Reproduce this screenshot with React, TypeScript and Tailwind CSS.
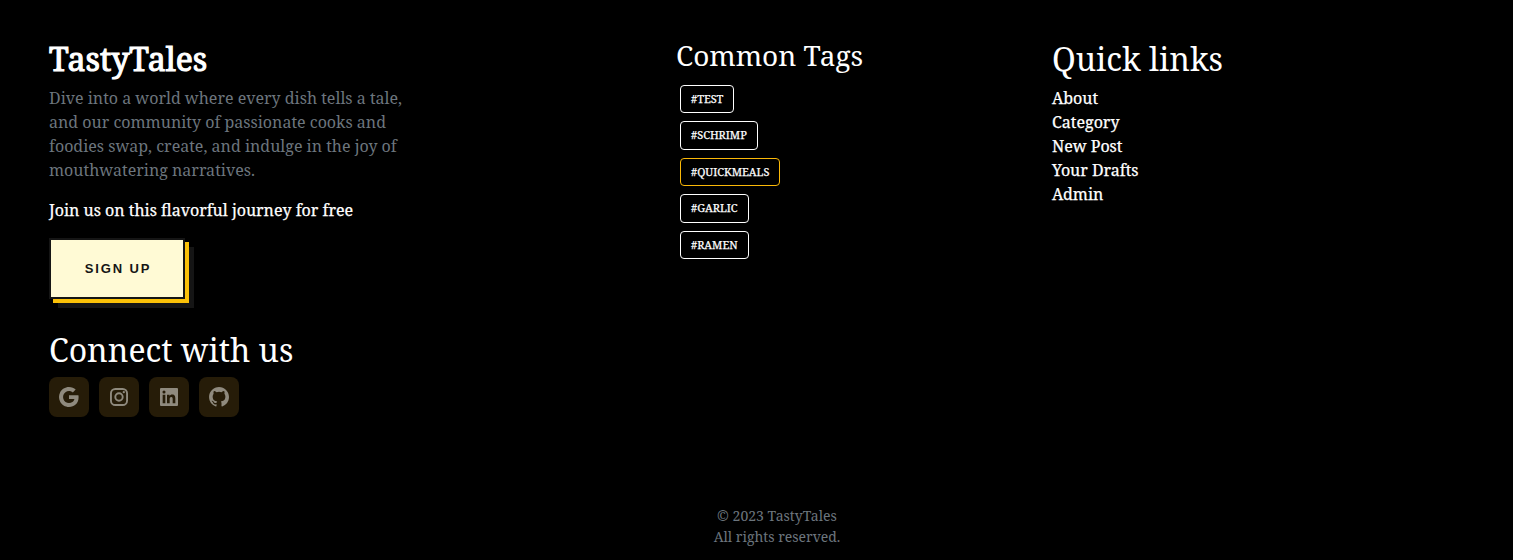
import React from 'react';
import { BiLogoGithub, BiLogoLinkedinSquare } from 'react-icons/bi';
import { RiGoogleFill } from 'react-icons/ri';

function InstagramIcon({ className }: { className?: string }) {
  return (
    <svg viewBox="0 0 24 24" fill="none" className={className}>
      <rect x="3.95" y="3.95" width="16.1" height="16.1" rx="4.4" stroke="currentColor" strokeWidth="1.9" />
      <circle cx="12" cy="12" r="3.7" stroke="currentColor" strokeWidth="1.9" />
      <circle cx="16.8" cy="7.2" r="1.15" fill="currentColor" />
    </svg>
  );
}

const tags = ['#TEST', '#SCHRIMP', '#QUICKMEALS', '#GARLIC', '#RAMEN'];
const links = ['About', 'Category', 'New Post', 'Your Drafts', 'Admin'];
const socials = [
  { name: 'Google', Icon: RiGoogleFill },
  { name: 'Instagram', Icon: InstagramIcon },
  { name: 'LinkedIn', Icon: BiLogoLinkedinSquare },
  { name: 'GitHub', Icon: BiLogoGithub },
];

export default function App() {
  return (
    <footer className="flex h-[560px] w-full flex-col overflow-hidden bg-black pt-10 pl-[49px] font-['Noto_Serif',serif] text-base text-white">
      <div className="flex h-[465px]">
        <section className="w-[627px] shrink-0">
          <h2 className="mb-2 text-[32px] leading-[38.4px] tracking-[-0.05px] [-webkit-text-stroke:1.1px_white]">TastyTales</h2>
          <p className="mb-4 w-[376px] text-[#6c757d]">
            Dive into a world where every dish tells a tale, and our community of passionate cooks and foodies swap, create, and indulge in the joy of mouthwatering narratives.
          </p>
          <p className="[-webkit-text-stroke:0.25px_white]">Join us on this flavorful journey for free</p>
          <button
            type="button"
            className="mt-[15.6px] flex h-[61px] w-[136px] items-center justify-center border-2 border-[#151515] bg-[#fffad5] pl-0.5 font-['Liberation_Sans',Arial,sans-serif] text-[13px] font-bold tracking-[1.85px] text-[#151515] shadow-[4px_4px_0_0_#fbc108,9px_9px_0_0_#151515]"
          >
            SIGN UP
          </button>
          <h2 className="mt-8 mb-2 text-[32px] leading-[38.4px]">Connect with us</h2>
          <ul className="flex gap-2.5">
            {socials.map(({ name, Icon }) => (
              <li key={name}>
                <a href="#" aria-label={name} className="flex size-10 items-center justify-center rounded-lg bg-[#261c08] text-[#8f8a7e]">
                  <Icon className="size-6" />
                </a>
              </li>
            ))}
          </ul>
        </section>
        <section className="w-[376px] shrink-0">
          <h3 className="-mt-px mb-[9px] text-[28px] leading-[33.6px] tracking-[-0.05px]">Common Tags</h3>
          <ul className="flex flex-col items-start gap-2 pt-[3.4px] pl-1">
            {tags.map((tag) => (
              <li
                key={tag}
                className={
                  'flex h-[28.5px] items-center rounded-[4px] border px-2.5 text-[11px] [-webkit-text-stroke:0.25px_white] ' +
                  (tag === '#QUICKMEALS' ? 'border-[#fbb908]' : 'border-white')
                }
              >
                {tag}
              </li>
            ))}
          </ul>
        </section>
        <section>
          <h2 className="mb-2 text-[32px] leading-[38.4px]">Quick links</h2>
          <ul className="[-webkit-text-stroke:0.25px_white]">
            {links.map((link) => (
              <li key={link}>
                <a href="#">{link}</a>
              </li>
            ))}
          </ul>
        </section>
      </div>
      <p className="pr-2 text-center text-sm leading-[21px] text-[#6c757d]">
        © 2023 TastyTales
        <br />
        All rights reserved.
      </p>
    </footer>
  );
}
